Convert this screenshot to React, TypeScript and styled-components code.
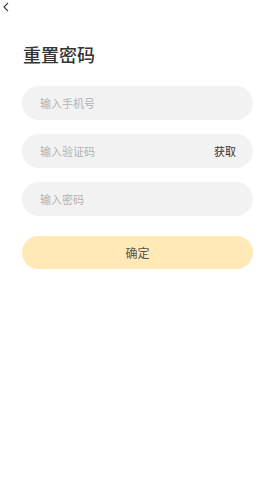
import React from 'react';
import styled, {createGlobalStyle} from 'styled-components';

const GlobalStyle = createGlobalStyle`
  html, body {
    margin: 0;
    padding: 0;
    background: #ffffff;
  }
  body {
    font-family: "Noto Sans CJK SC", "Noto Sans", sans-serif;
  }
`;

const Page = styled.div`
  width: 270px;
  height: 477px;
  background: #ffffff;
  display: flex;
  flex-direction: column;
`;

const BackButton = styled.button`
  border: none;
  background: none;
  padding: 0;
  margin: 1px 0 0 2px;
  width: 8px;
  height: 11px;
  display: flex;
  align-items: center;
  justify-content: center;
  cursor: pointer;
`;

const Title = styled.h1`
  margin: 30px 0 0 23px;
  font-size: 18px;
  line-height: 24px;
  font-weight: 500;
  color: #333333;
`;

const Form = styled.div`
  margin: 20px 17px 0 22px;
  display: flex;
  flex-direction: column;
  gap: 14px;
`;

const Field = styled.div`
  height: 34px;
  border-radius: 17px;
  background: #f2f2f2;
  display: flex;
  align-items: center;
  padding: 0 17px 0 18px;
`;

const Input = styled.input`
  flex: 1;
  min-width: 0;
  border: none;
  outline: none;
  background: transparent;
  padding: 0;
  font-family: inherit;
  font-size: 11px;
  color: #333333;

  &::placeholder {
    color: #b3b3b3;
  }
`;

const GetCode = styled.span`
  font-size: 11px;
  color: #333333;
`;

const Submit = styled.button`
  margin-top: 6px;
  height: 33px;
  border: none;
  border-radius: 17px;
  background: #ffe9b6;
  font-family: inherit;
  font-size: 12px;
  color: #555555;
  cursor: pointer;
`;

const App = () => (
  <Page>
    <GlobalStyle />
    <BackButton aria-label="back">
      <svg width="6" height="10" viewBox="0 0 6 10">
        <path d="M5 0.8 L1 5 L5 9.2" fill="none" stroke="#333" strokeWidth="1.1" />
      </svg>
    </BackButton>
    <Title>重置密码</Title>
    <Form>
      <Field>
        <Input placeholder="输入手机号" />
      </Field>
      <Field>
        <Input placeholder="输入验证码" />
        <GetCode>获取</GetCode>
      </Field>
      <Field>
        <Input type="password" placeholder="输入密码" />
      </Field>
      <Submit>确定</Submit>
    </Form>
  </Page>
);

export default App;
